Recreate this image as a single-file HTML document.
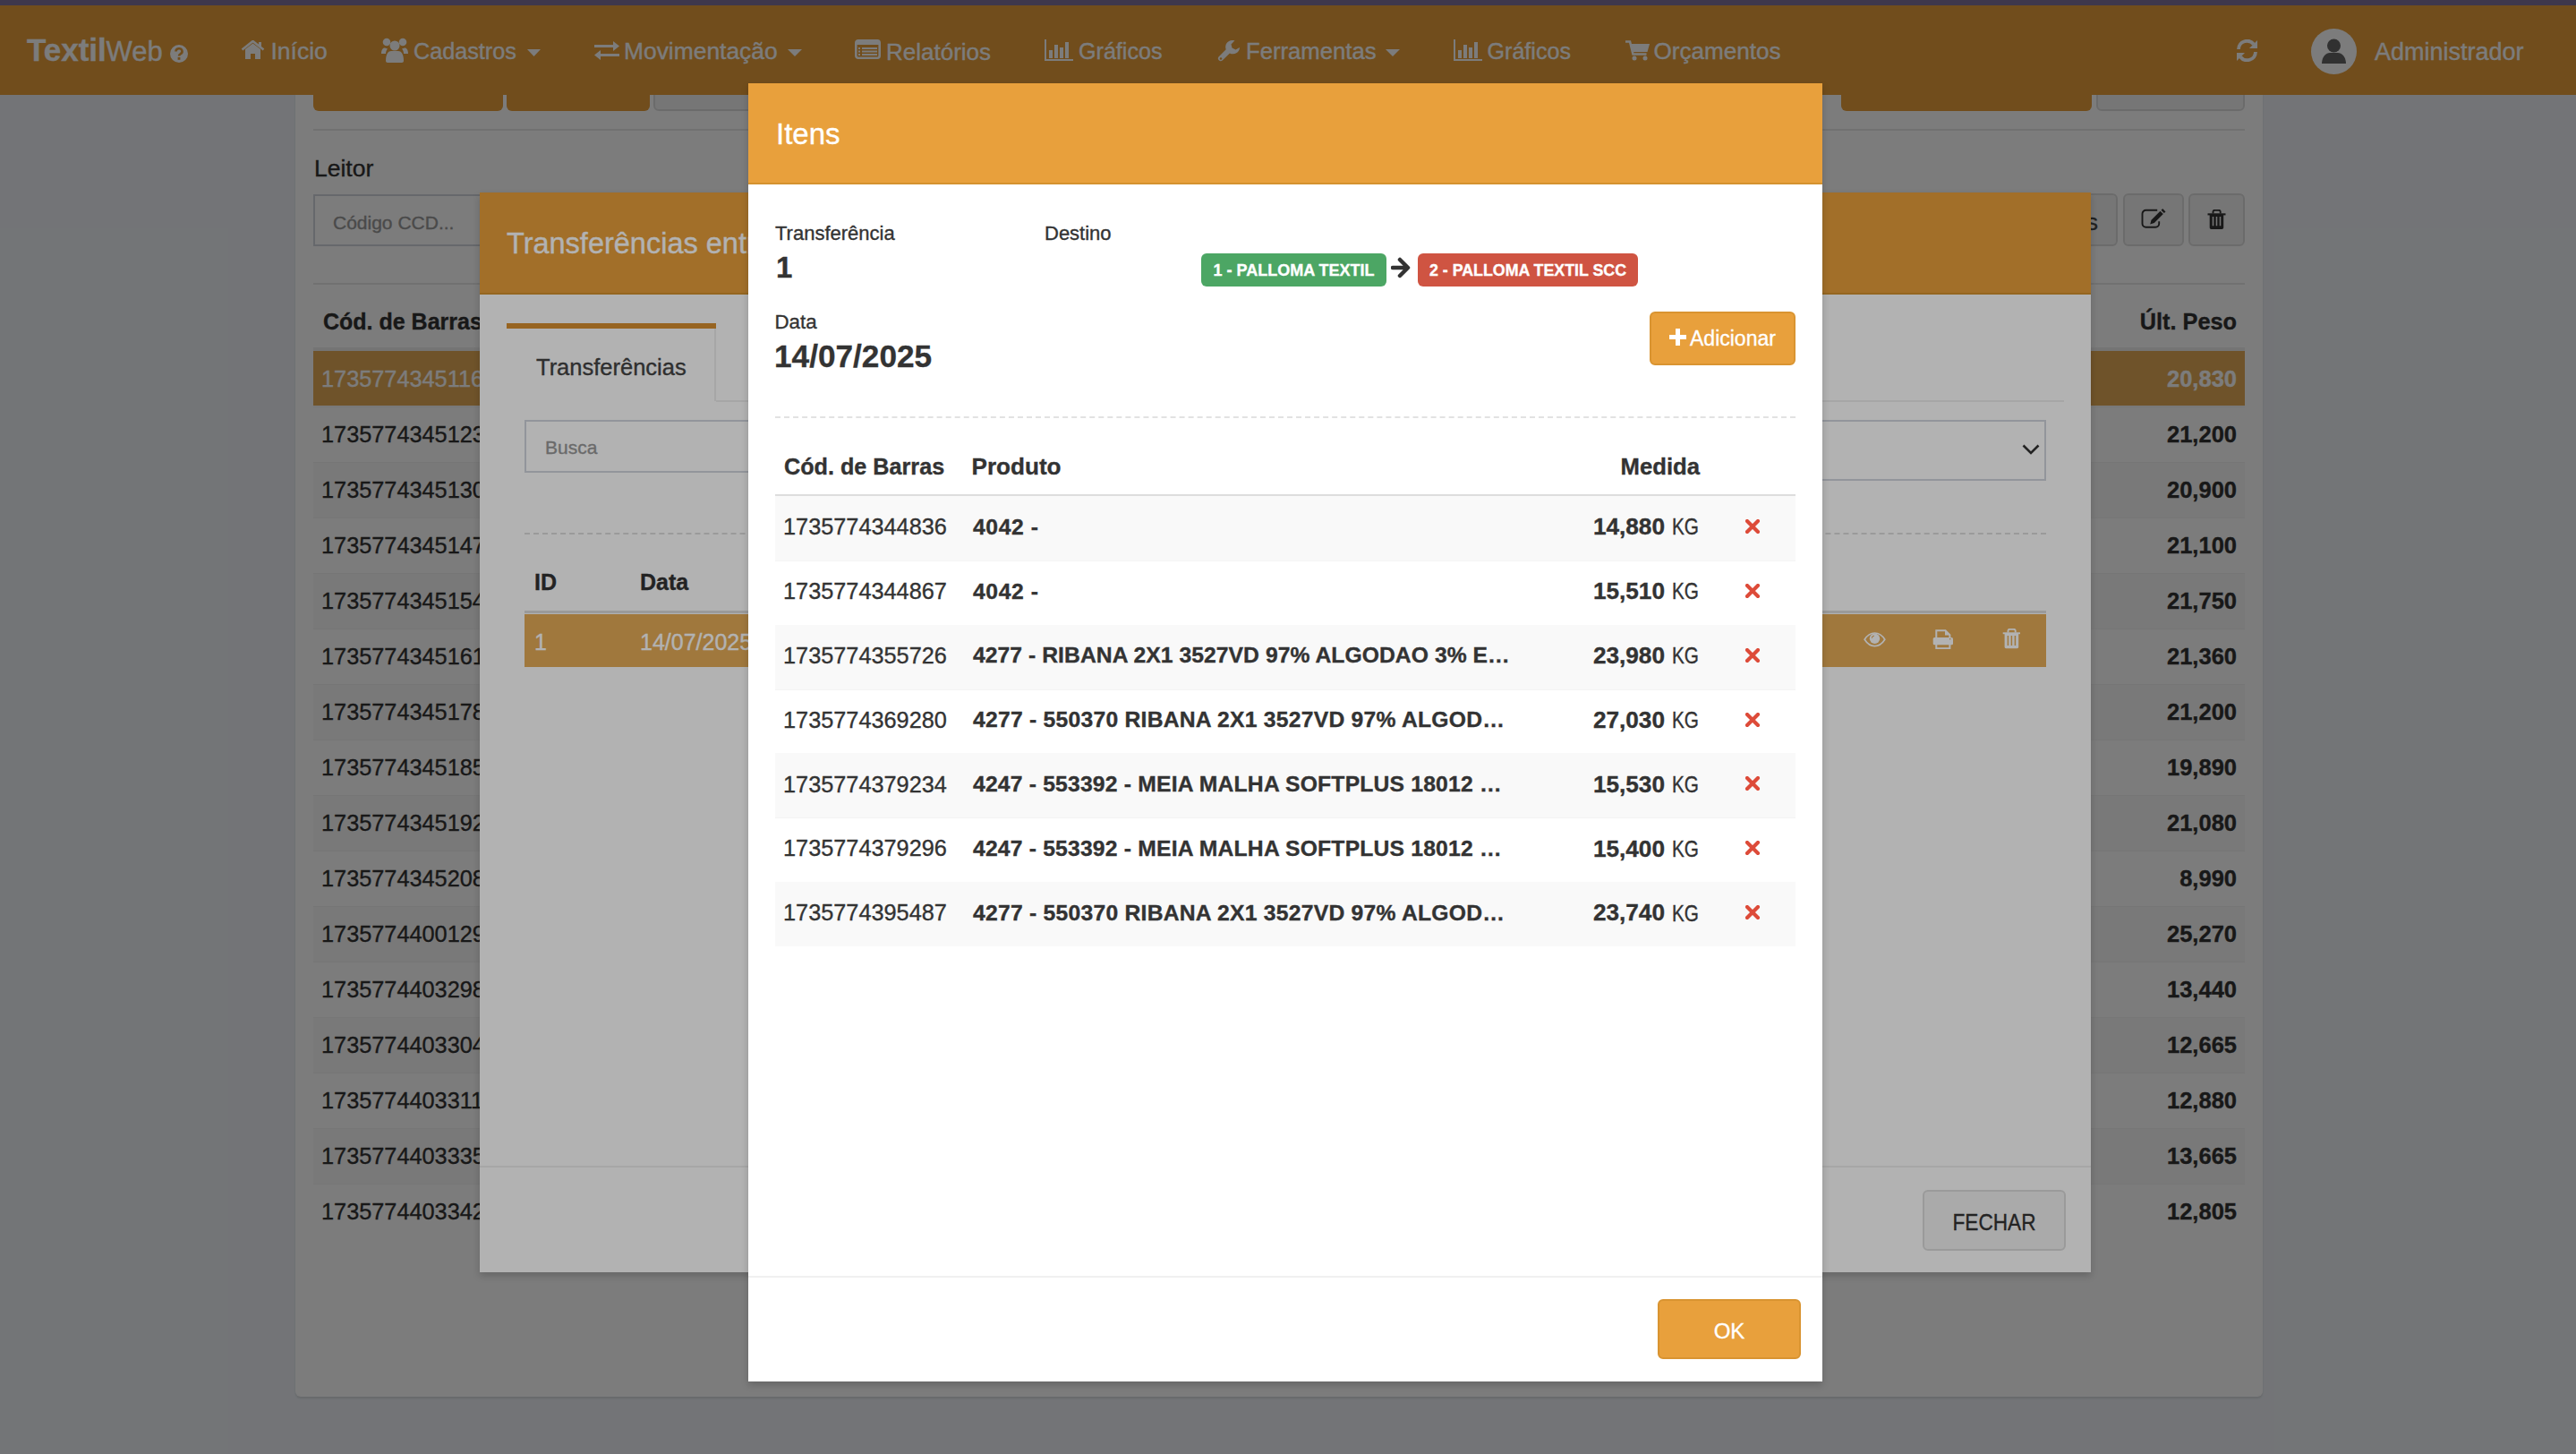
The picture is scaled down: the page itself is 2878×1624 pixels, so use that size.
<!DOCTYPE html><html><head><meta charset="utf-8"><style>
html,body{margin:0;padding:0}
body{width:2878px;height:1624px;overflow:hidden;position:relative;background:#ecf0f5;font-family:"Liberation Sans",sans-serif}
.t{position:absolute;white-space:pre;line-height:normal;-webkit-text-stroke:0.35px currentColor}
.r{position:absolute;box-sizing:border-box}
</style></head><body>
<div class="r" style="left:330px;top:60px;width:2198px;height:1500px;background:#fff;border-radius:6px;box-shadow:0 2px 2px rgba(0,0,0,0.1)"></div>
<div class="r" style="left:350px;top:60px;width:212px;height:64px;background:#e8a03c;border-radius:6px"></div>
<div class="r" style="left:566px;top:60px;width:160px;height:64px;background:#e8a03c;border-radius:6px"></div>
<div class="r" style="left:730px;top:60px;width:170px;height:64px;background:#f4f4f4;border-radius:6px;border:2px solid #ddd"></div>
<div class="r" style="left:2057px;top:60px;width:280px;height:64px;background:#e8a03c;border-radius:6px"></div>
<div class="r" style="left:2342px;top:60px;width:166px;height:64px;background:#f4f4f4;border-radius:6px;border:2px solid #ddd"></div>
<div class="r" style="left:350px;top:144px;width:2158px;height:2px;background:#e8e8e8;"></div>
<div class="t" style="left:351.0px;top:173.0px;font-size:26.5px;font-weight:400;color:#333;">Leitor</div>
<div class="r" style="left:350px;top:217px;width:650px;height:58px;background:#fff;border:2px solid #d2d6de"></div>
<div class="t" style="left:372.0px;top:237.0px;font-size:21px;font-weight:400;color:#999;">Código CCD...</div>
<div class="r" style="left:2100px;top:216px;width:266px;height:59px;background:#f4f4f4;border-radius:6px;border:2px solid #ddd"></div>
<div class="t" style="left:844.0px;width:1500px;text-align:right;top:232.5px;font-size:26px;font-weight:400;color:#444;">Transferências</div>
<div class="r" style="left:2372px;top:216px;width:68px;height:59px;background:#f4f4f4;border-radius:6px;border:2px solid #ddd"></div>
<div class="r" style="left:2445px;top:216px;width:63px;height:59px;background:#f4f4f4;border-radius:6px;border:2px solid #ddd"></div>
<svg class="r" style="left:2390px;top:232px;" width="30" height="26" viewBox="0 0 30 26"><path d="M20.2 2.8H7.5a4 4 0 0 0-4 4V17.8a4 4 0 0 0 4 4h10.7a4 4 0 0 0 4-4V15.3" fill="none" stroke="#333" stroke-width="1.9"/><path d="M12.2 18.4l1.3-4.6L23.5 3.8l3.3 3.3-10 10z" fill="#333"/><path d="M24.5 2.8l1.7-1.7 3.3 3.3-1.7 1.7z" fill="#333"/></svg>
<svg class="r" style="left:2466px;top:234px;" width="21" height="23" viewBox="0 0 21 23"><path d="M6.5 4.6V2.6a1.8 1.8 0 0 1 1.8-1.8h4.6a1.8 1.8 0 0 1 1.8 1.8v2" fill="none" stroke="#333" stroke-width="1.9"/><rect x="0.5" y="4.3" width="20" height="2.1" fill="#333"/><path d="M2.7 6h15.5v14.3a1.8 1.8 0 0 1-1.8 1.8H4.5a1.8 1.8 0 0 1-1.8-1.8z" fill="#333"/><path d="M6.5 8v10.2M10.5 8v10.2M14.5 8v10.2" stroke="#f4f4f4" stroke-width="1.5"/></svg>
<div class="r" style="left:350px;top:316px;width:2158px;height:2px;background:#e8e8e8;"></div>
<div class="t" style="left:361.0px;top:345.4px;font-size:25px;font-weight:700;color:#333;">Cód. de Barras</div>
<div class="t" style="left:999.0px;width:1500px;text-align:right;top:345.1px;font-size:25.3px;font-weight:700;color:#333;">Últ. Peso</div>
<div class="r" style="left:350px;top:388px;width:2158px;height:4px;background:#f0f0f0;"></div>
<div class="r" style="left:350px;top:392px;width:2158px;height:61px;background:#e5ac58;"></div>
<div class="t" style="left:359.0px;top:409.1px;font-size:25.3px;font-weight:400;color:#fff;">1735774345116</div>
<div class="t" style="left:999.0px;width:1500px;text-align:right;top:408.9px;font-size:25.5px;font-weight:700;color:#fff;">20,830</div>
<div class="r" style="left:350px;top:454px;width:2158px;height:1px;background:#f4f4f4;"></div>
<div class="t" style="left:359.0px;top:471.1px;font-size:25.3px;font-weight:400;color:#333;">1735774345123</div>
<div class="t" style="left:999.0px;width:1500px;text-align:right;top:470.9px;font-size:25.5px;font-weight:700;color:#333;">21,200</div>
<div class="r" style="left:350px;top:516px;width:2158px;height:62px;background:#f9f9f9;"></div>
<div class="r" style="left:350px;top:516px;width:2158px;height:1px;background:#f4f4f4;"></div>
<div class="t" style="left:359.0px;top:533.1px;font-size:25.3px;font-weight:400;color:#333;">1735774345130</div>
<div class="t" style="left:999.0px;width:1500px;text-align:right;top:532.9px;font-size:25.5px;font-weight:700;color:#333;">20,900</div>
<div class="r" style="left:350px;top:578px;width:2158px;height:1px;background:#f4f4f4;"></div>
<div class="t" style="left:359.0px;top:595.1px;font-size:25.3px;font-weight:400;color:#333;">1735774345147</div>
<div class="t" style="left:999.0px;width:1500px;text-align:right;top:594.9px;font-size:25.5px;font-weight:700;color:#333;">21,100</div>
<div class="r" style="left:350px;top:640px;width:2158px;height:62px;background:#f9f9f9;"></div>
<div class="r" style="left:350px;top:640px;width:2158px;height:1px;background:#f4f4f4;"></div>
<div class="t" style="left:359.0px;top:657.1px;font-size:25.3px;font-weight:400;color:#333;">1735774345154</div>
<div class="t" style="left:999.0px;width:1500px;text-align:right;top:656.9px;font-size:25.5px;font-weight:700;color:#333;">21,750</div>
<div class="r" style="left:350px;top:702px;width:2158px;height:1px;background:#f4f4f4;"></div>
<div class="t" style="left:359.0px;top:719.1px;font-size:25.3px;font-weight:400;color:#333;">1735774345161</div>
<div class="t" style="left:999.0px;width:1500px;text-align:right;top:718.9px;font-size:25.5px;font-weight:700;color:#333;">21,360</div>
<div class="r" style="left:350px;top:764px;width:2158px;height:62px;background:#f9f9f9;"></div>
<div class="r" style="left:350px;top:764px;width:2158px;height:1px;background:#f4f4f4;"></div>
<div class="t" style="left:359.0px;top:781.1px;font-size:25.3px;font-weight:400;color:#333;">1735774345178</div>
<div class="t" style="left:999.0px;width:1500px;text-align:right;top:780.9px;font-size:25.5px;font-weight:700;color:#333;">21,200</div>
<div class="r" style="left:350px;top:826px;width:2158px;height:1px;background:#f4f4f4;"></div>
<div class="t" style="left:359.0px;top:843.1px;font-size:25.3px;font-weight:400;color:#333;">1735774345185</div>
<div class="t" style="left:999.0px;width:1500px;text-align:right;top:842.9px;font-size:25.5px;font-weight:700;color:#333;">19,890</div>
<div class="r" style="left:350px;top:888px;width:2158px;height:62px;background:#f9f9f9;"></div>
<div class="r" style="left:350px;top:888px;width:2158px;height:1px;background:#f4f4f4;"></div>
<div class="t" style="left:359.0px;top:905.1px;font-size:25.3px;font-weight:400;color:#333;">1735774345192</div>
<div class="t" style="left:999.0px;width:1500px;text-align:right;top:904.9px;font-size:25.5px;font-weight:700;color:#333;">21,080</div>
<div class="r" style="left:350px;top:950px;width:2158px;height:1px;background:#f4f4f4;"></div>
<div class="t" style="left:359.0px;top:967.1px;font-size:25.3px;font-weight:400;color:#333;">1735774345208</div>
<div class="t" style="left:999.0px;width:1500px;text-align:right;top:966.9px;font-size:25.5px;font-weight:700;color:#333;">8,990</div>
<div class="r" style="left:350px;top:1012px;width:2158px;height:62px;background:#f9f9f9;"></div>
<div class="r" style="left:350px;top:1012px;width:2158px;height:1px;background:#f4f4f4;"></div>
<div class="t" style="left:359.0px;top:1029.1px;font-size:25.3px;font-weight:400;color:#333;">1735774400129</div>
<div class="t" style="left:999.0px;width:1500px;text-align:right;top:1028.9px;font-size:25.5px;font-weight:700;color:#333;">25,270</div>
<div class="r" style="left:350px;top:1074px;width:2158px;height:1px;background:#f4f4f4;"></div>
<div class="t" style="left:359.0px;top:1091.1px;font-size:25.3px;font-weight:400;color:#333;">1735774403298</div>
<div class="t" style="left:999.0px;width:1500px;text-align:right;top:1090.9px;font-size:25.5px;font-weight:700;color:#333;">13,440</div>
<div class="r" style="left:350px;top:1136px;width:2158px;height:62px;background:#f9f9f9;"></div>
<div class="r" style="left:350px;top:1136px;width:2158px;height:1px;background:#f4f4f4;"></div>
<div class="t" style="left:359.0px;top:1153.1px;font-size:25.3px;font-weight:400;color:#333;">1735774403304</div>
<div class="t" style="left:999.0px;width:1500px;text-align:right;top:1152.9px;font-size:25.5px;font-weight:700;color:#333;">12,665</div>
<div class="r" style="left:350px;top:1198px;width:2158px;height:1px;background:#f4f4f4;"></div>
<div class="t" style="left:359.0px;top:1215.1px;font-size:25.3px;font-weight:400;color:#333;">1735774403311</div>
<div class="t" style="left:999.0px;width:1500px;text-align:right;top:1214.9px;font-size:25.5px;font-weight:700;color:#333;">12,880</div>
<div class="r" style="left:350px;top:1260px;width:2158px;height:62px;background:#f9f9f9;"></div>
<div class="r" style="left:350px;top:1260px;width:2158px;height:1px;background:#f4f4f4;"></div>
<div class="t" style="left:359.0px;top:1277.1px;font-size:25.3px;font-weight:400;color:#333;">1735774403335</div>
<div class="t" style="left:999.0px;width:1500px;text-align:right;top:1276.9px;font-size:25.5px;font-weight:700;color:#333;">13,665</div>
<div class="r" style="left:350px;top:1322px;width:2158px;height:1px;background:#f4f4f4;"></div>
<div class="t" style="left:359.0px;top:1339.1px;font-size:25.3px;font-weight:400;color:#333;">1735774403342</div>
<div class="t" style="left:999.0px;width:1500px;text-align:right;top:1338.9px;font-size:25.5px;font-weight:700;color:#333;">12,805</div>
<div class="r" style="left:0px;top:0px;width:2878px;height:6px;background:#81729e;"></div>
<div class="r" style="left:0px;top:6px;width:2878px;height:100px;background:#e8a03c;"></div>
<div class="t" style="left:30.0px;top:36.3px;font-size:35px;font-weight:700;color:#fff;">Textil</div>
<div class="t" style="left:118.5px;top:39.9px;font-size:31px;font-weight:400;color:#fff;">Web</div>
<svg class="r" style="left:190px;top:50px;" width="20" height="20" viewBox="0 0 20 20"><circle cx="10" cy="10" r="10" fill="#fff"/><path d="M6.5 7.5a3.5 3.2 0 1 1 5 2.8c-1 .6-1.5 1-1.5 2.2" fill="none" stroke="#e8a03c" stroke-width="2.6"/><rect x="8.6" y="14" width="2.8" height="2.8" fill="#e8a03c"/></svg>
<svg class="r" style="left:269px;top:45px;" width="27" height="21" viewBox="0 0 27 21"><path d="M1.5 10.5L13.5 1l12 9.5" fill="none" stroke="#fff" stroke-width="2.6"/><path d="M20 2h3v5h-3z" fill="#fff"/><path d="M5 10l8.5-6.5L22 10v11h-6v-6h-5v6H5z" fill="#fff"/></svg>
<div class="t" style="left:302.5px;top:42.0px;font-size:26.5px;font-weight:400;color:#fff;">Início</div>
<svg class="r" style="left:426px;top:42px;" width="30" height="28" viewBox="0 0 30 28"><circle cx="6" cy="5" r="4.3" fill="#fff"/><circle cx="24" cy="5" r="4.3" fill="#fff"/><circle cx="15" cy="9" r="5.5" fill="#fff"/><path d="M0 18c0-5 2-6.5 4-6.5l3 1c-1 1-2 3-2 5.5z" fill="#fff"/><path d="M30 18c0-5-2-6.5-4-6.5l-3 1c1 1 2 3 2 5.5z" fill="#fff"/><path d="M5 26c0-8 3-11 6-11h8c3 0 6 3 6 11c0 1-1 2-2 2H7c-1 0-2-1-2-2z" fill="#fff"/></svg>
<div class="t" style="left:462.0px;top:43.2px;font-size:25.2px;font-weight:400;color:#fff;">Cadastros</div>
<svg class="r" style="left:589px;top:55px;" width="15" height="8" viewBox="0 0 15 8"><path d="M0 0h15L7.5 8z" fill="#fff"/></svg>
<svg class="r" style="left:664px;top:46px;" width="28" height="21" viewBox="0 0 28 21"><path d="M0 4h21V0l7 5.5-7 5.5V7H0z" fill="#fff"/><path d="M28 14H7v-4l-7 5.5L7 21v-4h21z" fill="#fff"/></svg>
<div class="t" style="left:697.0px;top:42.1px;font-size:26.4px;font-weight:400;color:#fff;">Movimentação</div>
<svg class="r" style="left:880px;top:55px;" width="16" height="8" viewBox="0 0 16 8"><path d="M0 0h16L8 8z" fill="#fff"/></svg>
<svg class="r" style="left:955px;top:44px;" width="29" height="22" viewBox="0 0 29 22"><rect x="1.3" y="1.3" width="26.4" height="19.4" rx="2.5" fill="none" stroke="#fff" stroke-width="2.6"/><rect x="1" y="1" width="27" height="5" fill="#fff"/><path d="M4 10h2M4 13.5h2M4 17h2M8 10h17M8 13.5h17M8 17h17" stroke="#fff" stroke-width="2"/></svg>
<div class="t" style="left:990.0px;top:42.5px;font-size:26px;font-weight:400;color:#fff;">Relatórios</div>
<svg class="r" style="left:1167px;top:44px;" width="32" height="24" viewBox="0 0 32 24"><path d="M1 0v23h31" fill="none" stroke="#fff" stroke-width="2"/><rect x="5" y="12" width="4" height="9" fill="#fff"/><rect x="11" y="6" width="4" height="15" fill="#fff"/><rect x="17" y="9" width="4" height="12" fill="#fff"/><rect x="23" y="3" width="4" height="18" fill="#fff"/></svg>
<div class="t" style="left:1205.0px;top:43.3px;font-size:25.1px;font-weight:400;color:#fff;">Gráficos</div>
<svg class="r" style="left:1360px;top:44px;" width="26" height="26" viewBox="0 0 26 26"><path d="M16.5 1a7.5 7.5 0 0 0-6.8 10.2L1.5 19.4a3 3 0 0 0 4.2 4.2l8.2-8.2A7.5 7.5 0 0 0 25 9l-4.5 2.5-4-2-1-4L19.5 1.3A7.5 7.5 0 0 0 16.5 1z" fill="#fff"/><circle cx="4" cy="21.5" r="1.2" fill="#e8a03c"/></svg>
<div class="t" style="left:1392.0px;top:42.7px;font-size:25.7px;font-weight:400;color:#fff;">Ferramentas</div>
<svg class="r" style="left:1548px;top:55px;" width="16" height="8" viewBox="0 0 16 8"><path d="M0 0h16L8 8z" fill="#fff"/></svg>
<svg class="r" style="left:1624px;top:44px;" width="32" height="24" viewBox="0 0 32 24"><path d="M1 0v23h31" fill="none" stroke="#fff" stroke-width="2"/><rect x="5" y="12" width="4" height="9" fill="#fff"/><rect x="11" y="6" width="4" height="15" fill="#fff"/><rect x="17" y="9" width="4" height="12" fill="#fff"/><rect x="23" y="3" width="4" height="18" fill="#fff"/></svg>
<div class="t" style="left:1661.5px;top:43.3px;font-size:25.1px;font-weight:400;color:#fff;">Gráficos</div>
<svg class="r" style="left:1816px;top:45px;" width="27" height="23" viewBox="0 0 27 23"><path d="M0 1.5h5l3.5 14h15" fill="none" stroke="#fff" stroke-width="2.6"/><path d="M6 4h21l-2.5 9H8.5z" fill="#fff"/><circle cx="10" cy="20" r="2.5" fill="#fff"/><circle cx="22" cy="20" r="2.5" fill="#fff"/></svg>
<div class="t" style="left:1847.5px;top:42.4px;font-size:26.1px;font-weight:400;color:#fff;">Orçamentos</div>
<svg class="r" style="left:2497px;top:44px;" width="27" height="25" viewBox="0 0 27 25"><path d="M4 11A9.5 9.5 0 0 1 21 5.5" fill="none" stroke="#fff" stroke-width="3.8"/><path d="M25 1v9h-9z" fill="#fff"/><path d="M23 14A9.5 9.5 0 0 1 6 19.5" fill="none" stroke="#fff" stroke-width="3.8"/><path d="M2 24v-9h9z" fill="#fff"/></svg>
<svg class="r" style="left:2582px;top:32px;" width="51" height="51" viewBox="0 0 51 51"><circle cx="25.5" cy="25.5" r="25.5" fill="#fff"/><circle cx="25.5" cy="19" r="7.5" fill="#666"/><path d="M12 39c0-8 5-12 9-12h9c4 0 9 4 9 12z" fill="#666"/></svg>
<div class="t" style="left:2653.0px;top:42.6px;font-size:27px;font-weight:400;color:#fff;">Administrador</div>
<div class="r" style="left:0px;top:0px;width:2878px;height:1624px;background:rgba(0,0,0,0.3);"></div>
<div class="r" style="left:536px;top:215px;width:1800px;height:1206px;background:#fff;box-shadow:0 4px 8px rgba(0,0,0,0.18)"></div>
<div class="r" style="left:536px;top:215px;width:1800px;height:114px;background:#e8a03c;border-bottom:2px solid #d4922f"></div>
<div class="t" style="left:566.0px;top:253.6px;font-size:32.5px;font-weight:400;color:#fff;">Transferências entre Empresas</div>
<div class="r" style="left:566px;top:361px;width:234px;height:6px;background:#d89030;"></div>
<div class="r" style="left:798px;top:367px;width:2px;height:81px;background:#eee;"></div>
<div class="r" style="left:800px;top:447px;width:1506px;height:2px;background:#eee;"></div>
<div class="t" style="left:599.0px;top:395.9px;font-size:25.5px;font-weight:400;color:#444;">Transferências</div>
<div class="r" style="left:586px;top:469px;width:914px;height:59px;background:#fff;border:2px solid #d2d6de"></div>
<div class="t" style="left:609.0px;top:488.0px;font-size:21px;font-weight:400;color:#999;">Busca</div>
<div class="r" style="left:1600px;top:469px;width:686px;height:68px;background:#fff;border:2px solid #d2d6de"></div>
<svg class="r" style="left:2259px;top:496px;" width="20" height="12" viewBox="0 0 20 12"><path d="M1.5 1.5l8.5 8.5 8.5-8.5" fill="none" stroke="#333" stroke-width="2.6"/></svg>
<div class="r" style="left:586px;top:595px;width:1700px;height:0;border-top:2px dashed #ddd"></div>
<div class="t" style="left:597.0px;top:636.4px;font-size:25px;font-weight:700;color:#333;">ID</div>
<div class="t" style="left:715.0px;top:636.4px;font-size:25px;font-weight:700;color:#333;">Data</div>
<div class="r" style="left:586px;top:682px;width:1700px;height:3px;background:#ddd;"></div>
<div class="r" style="left:586px;top:686px;width:1700px;height:59px;background:#e5ac58;"></div>
<div class="t" style="left:597.0px;top:703.4px;font-size:25px;font-weight:400;color:#fff;">1</div>
<div class="t" style="left:715.0px;top:703.4px;font-size:25px;font-weight:400;color:#fff;">14/07/2025</div>
<svg class="r" style="left:2082px;top:706px;" width="25" height="17" viewBox="0 0 25 17"><path d="M1.2 8.3C4.5 3 8.5 1 12.5 1s8 2 11.3 7.3C20.5 13.6 16.5 15.6 12.5 15.6S4.5 13.6 1.2 8.3z" fill="none" stroke="#fff" stroke-width="1.7"/><circle cx="12.5" cy="7.3" r="5.7" fill="#fff"/><path d="M9.3 6.6a3 3 0 0 1 2.6-2.6" fill="none" stroke="#e5ac58" stroke-width="1.1"/></svg>
<svg class="r" style="left:2159px;top:702px;" width="24" height="23" viewBox="0 0 24 23"><path d="M4.3 11V2.2h10.2l4.9 4.9V11" fill="none" stroke="#fff" stroke-width="2"/><path d="M14 1.5v6h6z" fill="#fff"/><rect x="0.7" y="10" width="22.3" height="8.3" rx="1.6" fill="#fff"/><rect x="4.3" y="17" width="15.1" height="5.2" fill="none" stroke="#fff" stroke-width="2"/><circle cx="19.7" cy="11.8" r="0.8" fill="#e5ac58"/></svg>
<svg class="r" style="left:2237px;top:702px;" width="21" height="23" viewBox="0 0 21 23"><path d="M6.5 4.6V2.6a1.8 1.8 0 0 1 1.8-1.8h4.6a1.8 1.8 0 0 1 1.8 1.8v2" fill="none" stroke="#fff" stroke-width="1.9"/><rect x="0.7" y="4.3" width="19.3" height="1.9" fill="#fff"/><path d="M2.6 6h15.6v14.6a1.6 1.6 0 0 1-1.6 1.6H4.2a1.6 1.6 0 0 1-1.6-1.6z" fill="#fff"/><path d="M6.4 8v11M10.4 8v11M14.4 8v11" stroke="#e5ac58" stroke-width="1.5"/></svg>
<div class="r" style="left:536px;top:1302px;width:1800px;height:2px;background:#eeeeee;"></div>
<div class="r" style="left:2148px;top:1329px;width:160px;height:68px;background:#f4f4f4;border:2px solid #ddd;border-radius:6px"></div>
<div class="t" style="left:1478.0px;width:1500px;text-align:center;top:1349.5px;font-size:26px;font-weight:400;color:#333;transform:scaleX(0.87);transform-origin:center top;">FECHAR</div>
<div class="r" style="left:0px;top:0px;width:2878px;height:1624px;background:rgba(0,0,0,0.3);"></div>
<div class="r" style="left:836px;top:93px;width:1200px;height:1450px;background:#fff;box-shadow:0 4px 8px rgba(0,0,0,0.18)"></div>
<div class="r" style="left:836px;top:93px;width:1200px;height:113px;background:#e8a03c;border-bottom:2px solid #d4922f"></div>
<div class="t" style="left:867.0px;top:131.1px;font-size:33px;font-weight:400;color:#fff;">Itens</div>
<div class="t" style="left:866.0px;top:248.1px;font-size:22px;font-weight:400;color:#333;">Transferência</div>
<div class="t" style="left:867.0px;top:280.1px;font-size:33px;font-weight:700;color:#333;">1</div>
<div class="t" style="left:1167.0px;top:248.1px;font-size:22px;font-weight:400;color:#333;">Destino</div>
<div class="r" style="left:1342px;top:283px;width:207px;height:37px;background:#4ca664;border-radius:6px"></div>
<div class="t" style="left:695.5px;width:1500px;text-align:center;top:291.7px;font-size:18px;font-weight:700;color:#fff;">1 - PALLOMA TEXTIL</div>
<svg class="r" style="left:1554px;top:287px;" width="23" height="24" viewBox="0 0 23 24"><path d="M2 12h16M10 3l9 9-9 9" fill="none" stroke="#333" stroke-width="4.5" stroke-linecap="round" stroke-linejoin="round"/></svg>
<div class="r" style="left:1584px;top:283px;width:246px;height:37px;background:#cf5442;border-radius:6px"></div>
<div class="t" style="left:957.0px;width:1500px;text-align:center;top:291.9px;font-size:17.8px;font-weight:700;color:#fff;">2 - PALLOMA TEXTIL SCC</div>
<div class="t" style="left:865.5px;top:346.8px;font-size:22.3px;font-weight:400;color:#333;">Data</div>
<div class="t" style="left:865.0px;top:378.1px;font-size:35.2px;font-weight:700;color:#333;">14/07/2025</div>
<div class="r" style="left:1843px;top:348px;width:163px;height:60px;background:#e8a03c;border:2px solid #d99431;border-radius:6px"></div>
<svg class="r" style="left:1865px;top:367px;" width="19" height="19" viewBox="0 0 19 19"><path d="M7 0h5v7h7v5h-7v7H7v-7H0V7h7z" fill="#fff"/></svg>
<div class="t" style="left:1888.0px;top:365.2px;font-size:23px;font-weight:400;color:#fff;">Adicionar</div>
<div class="r" style="left:866px;top:465px;width:1140px;height:0;border-top:2px dashed #e2e2e2"></div>
<div class="t" style="left:876.0px;top:507.2px;font-size:25.2px;font-weight:700;color:#333;">Cód. de Barras</div>
<div class="t" style="left:1085.5px;top:506.4px;font-size:26.1px;font-weight:700;color:#333;">Produto</div>
<div class="t" style="left:399.0px;width:1500px;text-align:right;top:506.7px;font-size:25.7px;font-weight:700;color:#333;">Medida</div>
<div class="r" style="left:866px;top:552px;width:1140px;height:2px;background:#ddd;"></div>
<div class="r" style="left:866px;top:554px;width:1140px;height:72px;background:#f9f9f9;"></div>
<div class="t" style="left:875.0px;top:574.1px;font-size:25.3px;font-weight:400;color:#333;">1735774344836</div>
<div class="t" style="left:1087.0px;top:574.6px;font-size:24.7px;font-weight:700;color:#333;letter-spacing:0.6px">4042 -</div>
<div class="t" style="left:360.0px;width:1500px;text-align:right;top:573.3px;font-size:26.2px;font-weight:700;color:#333;">14,880</div>
<div class="t" style="left:398.0px;width:1500px;text-align:right;top:574.4px;font-size:25px;font-weight:400;color:#333;transform:scaleX(0.83);transform-origin:right top;">KG</div>
<svg class="r" style="left:1950px;top:580px;" width="16" height="16" viewBox="0 0 16 16"><path d="M2 2l12 12M14 2L2 14" stroke="#dd4b39" stroke-width="4.2" stroke-linecap="round"/></svg>
<div class="r" style="left:866px;top:626px;width:1140px;height:1px;background:#f4f4f4;"></div>
<div class="t" style="left:875.0px;top:646.0px;font-size:25.3px;font-weight:400;color:#333;">1735774344867</div>
<div class="t" style="left:1087.0px;top:646.5px;font-size:24.7px;font-weight:700;color:#333;letter-spacing:0.6px">4042 -</div>
<div class="t" style="left:360.0px;width:1500px;text-align:right;top:645.1px;font-size:26.2px;font-weight:700;color:#333;">15,510</div>
<div class="t" style="left:398.0px;width:1500px;text-align:right;top:646.2px;font-size:25px;font-weight:400;color:#333;transform:scaleX(0.83);transform-origin:right top;">KG</div>
<svg class="r" style="left:1950px;top:652px;" width="16" height="16" viewBox="0 0 16 16"><path d="M2 2l12 12M14 2L2 14" stroke="#dd4b39" stroke-width="4.2" stroke-linecap="round"/></svg>
<div class="r" style="left:866px;top:698px;width:1140px;height:72px;background:#f9f9f9;"></div>
<div class="t" style="left:875.0px;top:717.8px;font-size:25.3px;font-weight:400;color:#333;">1735774355726</div>
<div class="t" style="left:1087.0px;top:718.4px;font-size:24.7px;font-weight:700;color:#333;letter-spacing:0.05px">4277 - RIBANA 2X1 3527VD 97% ALGODAO 3% E…</div>
<div class="t" style="left:360.0px;width:1500px;text-align:right;top:717.0px;font-size:26.2px;font-weight:700;color:#333;">23,980</div>
<div class="t" style="left:398.0px;width:1500px;text-align:right;top:718.1px;font-size:25px;font-weight:400;color:#333;transform:scaleX(0.83);transform-origin:right top;">KG</div>
<svg class="r" style="left:1950px;top:724px;" width="16" height="16" viewBox="0 0 16 16"><path d="M2 2l12 12M14 2L2 14" stroke="#dd4b39" stroke-width="4.2" stroke-linecap="round"/></svg>
<div class="r" style="left:866px;top:770px;width:1140px;height:1px;background:#f4f4f4;"></div>
<div class="t" style="left:875.0px;top:789.7px;font-size:25.3px;font-weight:400;color:#333;">1735774369280</div>
<div class="t" style="left:1087.0px;top:790.2px;font-size:24.7px;font-weight:700;color:#333;letter-spacing:0.24px">4277 - 550370 RIBANA 2X1 3527VD 97% ALGOD…</div>
<div class="t" style="left:360.0px;width:1500px;text-align:right;top:788.9px;font-size:26.2px;font-weight:700;color:#333;">27,030</div>
<div class="t" style="left:398.0px;width:1500px;text-align:right;top:790.0px;font-size:25px;font-weight:400;color:#333;transform:scaleX(0.83);transform-origin:right top;">KG</div>
<svg class="r" style="left:1950px;top:796px;" width="16" height="16" viewBox="0 0 16 16"><path d="M2 2l12 12M14 2L2 14" stroke="#dd4b39" stroke-width="4.2" stroke-linecap="round"/></svg>
<div class="r" style="left:866px;top:841px;width:1140px;height:72px;background:#f9f9f9;"></div>
<div class="t" style="left:875.0px;top:861.5px;font-size:25.3px;font-weight:400;color:#333;">1735774379234</div>
<div class="t" style="left:1087.0px;top:862.1px;font-size:24.7px;font-weight:700;color:#333;letter-spacing:0.19px">4247 - 553392 - MEIA MALHA SOFTPLUS 18012 …</div>
<div class="t" style="left:360.0px;width:1500px;text-align:right;top:860.7px;font-size:26.2px;font-weight:700;color:#333;">15,530</div>
<div class="t" style="left:398.0px;width:1500px;text-align:right;top:861.8px;font-size:25px;font-weight:400;color:#333;transform:scaleX(0.83);transform-origin:right top;">KG</div>
<svg class="r" style="left:1950px;top:867px;" width="16" height="16" viewBox="0 0 16 16"><path d="M2 2l12 12M14 2L2 14" stroke="#dd4b39" stroke-width="4.2" stroke-linecap="round"/></svg>
<div class="r" style="left:866px;top:913px;width:1140px;height:1px;background:#f4f4f4;"></div>
<div class="t" style="left:875.0px;top:933.4px;font-size:25.3px;font-weight:400;color:#333;">1735774379296</div>
<div class="t" style="left:1087.0px;top:933.9px;font-size:24.7px;font-weight:700;color:#333;letter-spacing:0.19px">4247 - 553392 - MEIA MALHA SOFTPLUS 18012 …</div>
<div class="t" style="left:360.0px;width:1500px;text-align:right;top:932.6px;font-size:26.2px;font-weight:700;color:#333;">15,400</div>
<div class="t" style="left:398.0px;width:1500px;text-align:right;top:933.7px;font-size:25px;font-weight:400;color:#333;transform:scaleX(0.83);transform-origin:right top;">KG</div>
<svg class="r" style="left:1950px;top:939px;" width="16" height="16" viewBox="0 0 16 16"><path d="M2 2l12 12M14 2L2 14" stroke="#dd4b39" stroke-width="4.2" stroke-linecap="round"/></svg>
<div class="r" style="left:866px;top:985px;width:1140px;height:72px;background:#f9f9f9;"></div>
<div class="t" style="left:875.0px;top:1005.3px;font-size:25.3px;font-weight:400;color:#333;">1735774395487</div>
<div class="t" style="left:1087.0px;top:1005.8px;font-size:24.7px;font-weight:700;color:#333;letter-spacing:0.24px">4277 - 550370 RIBANA 2X1 3527VD 97% ALGOD…</div>
<div class="t" style="left:360.0px;width:1500px;text-align:right;top:1004.4px;font-size:26.2px;font-weight:700;color:#333;">23,740</div>
<div class="t" style="left:398.0px;width:1500px;text-align:right;top:1005.5px;font-size:25px;font-weight:400;color:#333;transform:scaleX(0.83);transform-origin:right top;">KG</div>
<svg class="r" style="left:1950px;top:1011px;" width="16" height="16" viewBox="0 0 16 16"><path d="M2 2l12 12M14 2L2 14" stroke="#dd4b39" stroke-width="4.2" stroke-linecap="round"/></svg>
<div class="r" style="left:836px;top:1425px;width:1200px;height:2px;background:#f0f0f0;"></div>
<div class="r" style="left:1852px;top:1451px;width:160px;height:67px;background:#e8a03c;border:2px solid #d99431;border-radius:6px"></div>
<div class="t" style="left:1182.0px;width:1500px;text-align:center;top:1473.3px;font-size:24px;font-weight:400;color:#fff;">OK</div>
</body></html>
